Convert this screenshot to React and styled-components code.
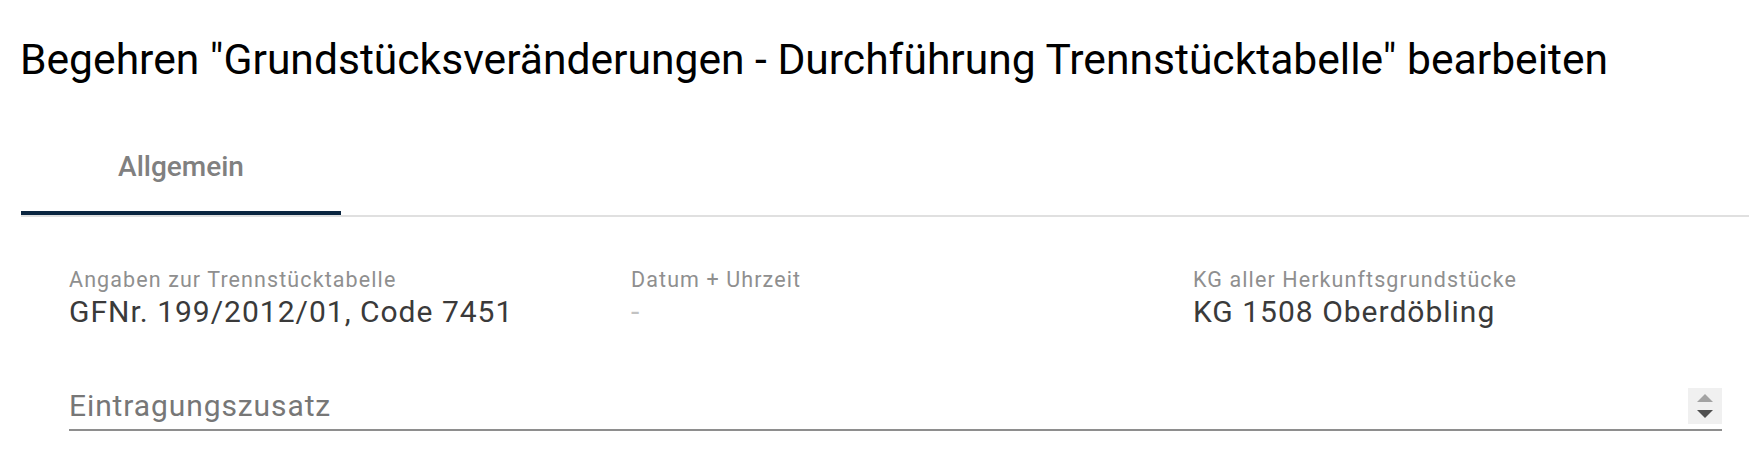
import React from "react";
import styled, { createGlobalStyle } from "styled-components";

const Global = createGlobalStyle`
  html, body { margin: 0; padding: 0; background: #fff; }
  body { font-family: Roboto, "Noto Sans", "Liberation Sans", sans-serif; }
  * { box-sizing: border-box; }
`;

const Page = styled.div`
  padding: 0 0 0 21px;
  width: 1749px;
`;

const Title = styled.h1`
  margin: 33px 0 0 -1px;
  font-size: 42.6px;
  line-height: 52px;
  font-weight: 400;
  color: #000;
`;

const TabBar = styled.div`
  margin-top: 28px;
  display: flex;
  border-bottom: 2px solid #e0e0e0;
`;

const Tab = styled.div`
  width: 320px;
  padding: 36px 0 26px;
  line-height: 36px;
  font-size: 28px;
  font-weight: 500;
  text-align: center;
  color: ${(p) => (p.$active ? "#808080" : "#9e9e9e")};
  border-bottom: 4px solid ${(p) => (p.$active ? "#0a2540" : "transparent")};
`;

const Body = styled.div`
  padding: 0 27px 0 48px;
`;

const InfoGrid = styled.div`
  margin-top: 51px;
  display: grid;
  grid-template-columns: 562px 562px 1fr;
`;

const Info = styled.div`
  display: flex;
  flex-direction: column;
`;

const Label = styled.div`
  font-size: 21.5px;
  line-height: 24px;
  letter-spacing: 1.1px;
  font-weight: 400;
  color: #8f8f8f;
`;

const Value = styled.div`
  margin-top: 2px;
  font-size: 30px;
  line-height: 36px;
  letter-spacing: 1px;
  font-weight: 400;
  color: ${(p) => (p.$empty ? "#c2c2c2" : "#3a3a3a")};
`;

const Field = styled.div`
  margin-top: 59px;
  display: flex;
  align-items: flex-start;
  border-bottom: 2px solid #8e8e8e;
  padding-bottom: 4px;
`;

const Placeholder = styled.div`
  flex: 1;
  margin-top: -1px;
  margin-bottom: 1px;
  font-size: 30px;
  line-height: 36px;
  letter-spacing: 0.9px;
  font-weight: 400;
  color: #777777;
`;

const Spinner = styled.div`
  width: 34px;
  height: 36px;
  margin-top: -1px;
  background: #f0f0f0;
  display: flex;
  flex-direction: column;
  align-items: center;
  justify-content: center;
  gap: 8px;
`;

const Arrow = styled.div`
  width: 0;
  height: 0;
  border-left: 8px solid transparent;
  border-right: 8px solid transparent;
  ${(p) =>
    p.$up
      ? "border-bottom: 8px solid #a3a3a3;"
      : "border-top: 8px solid #505050;"}
`;

const infos = [
  { label: "Angaben zur Trennstücktabelle", value: "GFNr. 199/2012/01, Code 7451" },
  { label: "Datum + Uhrzeit", value: "-", empty: true },
  { label: "KG aller Herkunftsgrundstücke", value: "KG 1508 Oberdöbling" },
];

export default function App() {
  return (
    <Page>
      <Global />
      <Title>Begehren "Grundstücksveränderungen - Durchführung Trennstücktabelle" bearbeiten</Title>
      <TabBar>
        <Tab $active>Allgemein</Tab>
      </TabBar>
      <Body>
        <InfoGrid>
          {infos.map((i) => (
            <Info key={i.label}>
              <Label>{i.label}</Label>
              <Value $empty={i.empty}>{i.value}</Value>
            </Info>
          ))}
        </InfoGrid>
        <Field>
          <Placeholder>Eintragungszusatz</Placeholder>
          <Spinner>
            <Arrow $up />
            <Arrow />
          </Spinner>
        </Field>
      </Body>
    </Page>
  );
}
